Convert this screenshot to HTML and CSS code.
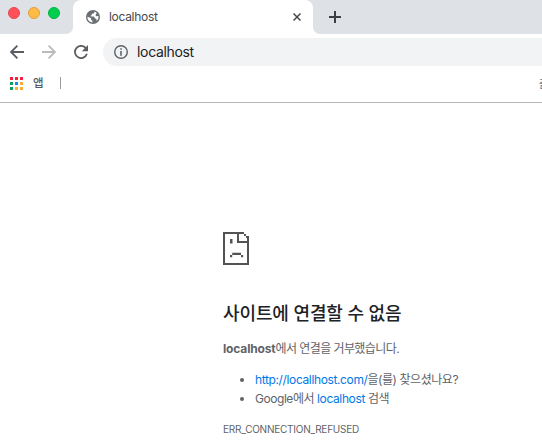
FILE: index.html
```html
<!DOCTYPE html>
<html lang="ko">
<head>
<meta charset="utf-8">
<title>localhost</title>
<link rel="stylesheet" href="styles.css">
</head>
<body>
<header class="tabstrip">
  <div class="lights"><i class="light red"></i><i class="light yellow"></i><i class="light green"></i></div>
  <div class="tab">
    <svg class="globe" width="14" height="14" viewBox="0 0 14 14"><circle cx="7" cy="7" r="7" fill="#6b6e72"/><path d="M1.4 6.8 4.8 8.1 5.2 9.8 6.4 10.7v1.7C3.2 12.1 1.3 9.8 1.4 6.8ZM8.6 1.6 8.1 3.2 6.1 3.8 5.5 5.2 4.5 5.8 5.1 6.6H8L8.8 8.3 10.4 8.9 10.6 10.9C12.2 9.7 12.8 7.7 12.4 6L10.5 6.2 9.4 5.2 10.2 3.9 10.7 2.8Z" fill="#fff"/></svg>
    <span class="tab-title">localhost</span>
    <svg class="close" width="8" height="8" viewBox="0 0 8 8"><path d="M.5.5 7.5 7.5M7.5.5.5 7.5" stroke="#45494d" stroke-width="1.5"/></svg>
  </div>
  <svg class="plus" width="12" height="12" viewBox="0 0 12 12"><path d="M6 0V12M0 6H12" stroke="#3c4043" stroke-width="2"/></svg>
</header>
<nav class="toolbar">
  <svg class="nav-icon" width="14" height="14" viewBox="0 0 14 14"><path d="M14 7H1.2M7.4.7 1.1 7 7.4 13.3" fill="none" stroke="#5a5e62" stroke-width="1.8"/></svg>
  <svg class="nav-icon" width="14" height="14" viewBox="0 0 14 14"><path d="M0 7H12.8M6.6.7 12.9 7 6.6 13.3" fill="none" stroke="#b9bbbd" stroke-width="1.8"/></svg>
  <svg class="nav-icon" width="14" height="14" viewBox="0 0 14 14"><path d="M11.8 3.1A6.1 6.1 0 1 0 12.9 8.8" fill="none" stroke="#5a5e62" stroke-width="1.8"/><path d="M14 0V6.2H7.8Z" fill="#5a5e62"/></svg>
  <div class="omnibox">
    <svg width="14" height="14" viewBox="0 0 14 14"><circle cx="7" cy="7" r="6.3" fill="none" stroke="#5f6368" stroke-width="1.4"/><path d="M7 3.2V4.7M7 6V10.7" stroke="#5f6368" stroke-width="1.6"/></svg>
    <span class="url">localhost</span>
  </div>
</nav>
<div class="bookmarks">
  <div class="apps"><i class="r"></i><i class="r"></i><i class="r"></i><i class="g"></i><i class="b"></i><i class="y"></i><i class="g"></i><i class="y"></i><i class="y"></i></div>
  <span class="apps-label">앱</span>
  <i class="divider"></i>
  <span class="overflow-label">즐겨찾기</span>
</div>
<main class="error">
  <svg class="sad" width="27" height="34" viewBox="0 0 27 34"><path fill-rule="evenodd" d="M0 0H21V2H23V4H26V33H0ZM2 2V31H24V11H14V2ZM16 2V9H24V6H23V4H21V2ZM7 7H9.5V11.5H7ZM9.2 20.8H18V23H9.2ZM7 23H9.2V25.3H7ZM18 23H20.2V25.3H18Z" fill="#535353"/></svg>
  <h1>사이트에 연결할 수 없음</h1>
  <p class="summary"><strong>localhost</strong>에서 연결을 거부했습니다.</p>
  <ul>
    <li><a class="suggest">http://locallhost.com/</a>을(를) 찾으셨나요?</li>
    <li>Google에서 <a class="host">localhost</a> 검색</li>
  </ul>
  <div class="code">ERR_CONNECTION_REFUSED</div>
</main>
</body>
</html>
```
FILE: styles.css
```css
* { box-sizing: border-box; }
html, body { margin: 0; height: 443px; overflow: hidden; }
body { background: #fff; color: #5f6368; font-family: Inter, "Noto Sans CJK KR", sans-serif; font-size: 12px; }
svg { display: block; flex: none; }
.tabstrip { display: flex; height: 34px; background: #fff; }
.lights { display: flex; gap: 8px; width: 73px; padding: 7px 0 0 8px; background: #dee1e6; border-bottom-right-radius: 7px; }
.light { width: 12px; height: 12px; border-radius: 50%; border: 1px solid; }
.red { background: #ff5159; border-color: #e5474f; }
.yellow { background: #ffbb45; border-color: #dfa03a; }
.green { background: #00ce4e; border-color: #00b540; }
.tab { display: flex; align-items: center; width: 240px; padding: 0 12px 0 13px; background: linear-gradient(#dee1e6, #dee1e6) top / 100% 8px no-repeat; position: relative; }
.tab::before { content: ""; position: absolute; inset: 0; background: #fff; border-radius: 8px 8px 0 0; }
.tab > * { position: relative; }
.tab-title { margin-left: 9px; padding-bottom: 1px; color: #45494d; letter-spacing: -0.3px; }
.close { margin-left: auto; }
.plus { box-sizing: content-box; width: 12px; padding: 11px 201px 11px 16px; background: #dee1e6; border-bottom-left-radius: 7px; }
.toolbar { display: flex; align-items: center; height: 36px; padding-left: 10px; gap: 18px; }
.omnibox { display: flex; align-items: center; flex: 1; height: 28px; margin-left: -3px; padding-left: 11px; background: #f1f3f4; border-radius: 14px 0 0 14px; }
.url { margin-left: 9px; padding-bottom: 2px; color: #202124; font-size: 14px; letter-spacing: -0.33px; }
.bookmarks { display: flex; align-items: center; height: 33px; padding: 0 0 6px 10px; border-bottom: 1px solid #b5b5b5; overflow: hidden; }
.apps { display: grid; grid-template-columns: repeat(3, 3px); gap: 2px; }
.apps i { height: 3px; }
.r { background: #f8203c; }
.g { background: #0c9d58; }
.b { background: #1688f5; }
.y { background: #ffad33; }
.apps-label { margin-left: 10px; font-size: 11.5px; line-height: 16px; font-weight: 500; color: #55585c; }
.divider { width: 1px; height: 12px; margin-left: 16px; background: #999; }
.overflow-label { flex: none; width: 3px; margin-left: auto; font-size: 10px; white-space: nowrap; overflow: hidden; }
.error { padding: 129px 0 0 223px; white-space: nowrap; }
h1 { margin: 34px 0 0; color: #202124; font-size: 18px; line-height: 28px; font-weight: 500; letter-spacing: -0.12px; }
p { margin: 12px 0 0; line-height: 18px; letter-spacing: -0.59px; }
strong { letter-spacing: -0.15px; }
ul { margin: 12px 0 0; padding: 0 0 0 32px; line-height: 19px; letter-spacing: -0.45px; }
a { color: #0078e7; letter-spacing: -0.37px; }
.code { margin-top: 12px; font-size: 10px; line-height: 18px; letter-spacing: -0.23px; }
```
